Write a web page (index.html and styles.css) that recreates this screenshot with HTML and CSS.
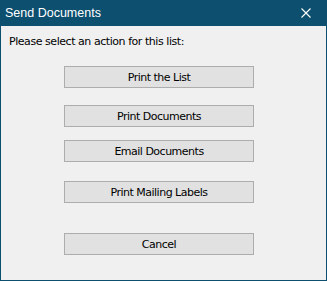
FILE: index.html
```html
<!DOCTYPE html>
<html lang="en">
<head>
    <meta charset="UTF-8">
    <title>Send Documents</title>
    <link rel="stylesheet" href="styles.css">
</head>
<body>
    <div class="window">
        <div class="titlebar">
            <span class="title">Send Documents</span>
            <button class="close" title="Close">
                <svg width="10" height="10" viewBox="0 0 10 10">
                    <path d="M0.5 0.5 L9.5 9.5 M9.5 0.5 L0.5 9.5" stroke="#fff" stroke-width="1.1" fill="none"/>
                </svg>
            </button>
        </div>
        <div class="content">
            <p class="prompt">Please select an action for this list:</p>
            <div class="actions">
                <button class="action">Print the List</button>
                <button class="action gap-sm">Print Documents</button>
                <button class="action gap-xs">Email Documents</button>
                <button class="action gap-md">Print Mailing Labels</button>
                <button class="action gap-lg">Cancel</button>
            </div>
        </div>
    </div>
</body>
</html>
```

FILE: styles.css
```css
html, body {
    margin: 0;
    padding: 0;
}
body {
    font-family: 'DejaVu Sans', 'Liberation Sans', sans-serif;
    background-color: #f0f0f0;
}
.window {
    width: 327px;
    height: 281px;
    box-sizing: border-box;
    border: 1px solid #0c4f6f;
    border-top: none;
    background-color: #f0f0f0;
    display: flex;
    flex-direction: column;
}
.titlebar {
    height: 26px;
    background-color: #0c4f6f;
    color: #fff;
    display: flex;
    align-items: center;
    justify-content: space-between;
    padding-left: 4px;
}
.title {
    font-family: 'Liberation Sans', sans-serif;
    font-size: 12.5px;
}
.close {
    width: 40px;
    height: 26px;
    border: none;
    background: transparent;
    padding: 0;
    margin: 0;
    display: flex;
    align-items: center;
    justify-content: center;
}
.content {
    padding: 9px 0 0 8px;
}
.prompt {
    margin: 0;
    font-size: 11px;
    letter-spacing: -0.45px;
    color: #000;
}
.actions {
    display: flex;
    flex-direction: column;
    align-items: flex-start;
    padding-left: 55px;
    margin-top: 18px;
}
.action {
    width: 190px;
    height: 22px;
    margin: 0;
    padding: 0;
    border: 1px solid #adadad;
    border-radius: 0;
    background-color: #e1e1e1;
    color: #000;
    font-family: 'DejaVu Sans', sans-serif;
    font-size: 11px;
    letter-spacing: -0.5px;
}
.gap-xs {
    margin-top: 13px;
}
.gap-sm {
    margin-top: 17px;
}
.gap-md {
    margin-top: 19px;
}
.gap-lg {
    margin-top: 30px;
}
```
